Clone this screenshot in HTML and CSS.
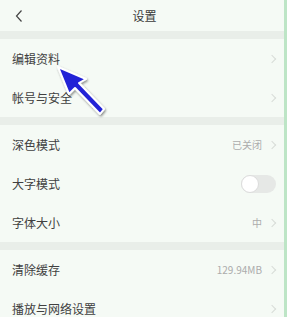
FILE: index.html
```html
<!DOCTYPE html>
<html lang="zh">
<head>
<meta charset="utf-8">
<link rel="stylesheet" href="styles.css">
</head>
<body>
<div class="page">
  <div class="screen">
    <div class="header">
      <svg class="back" width="10" height="14" viewBox="0 0 10 14"><path d="M7.5 1.5 L2.5 7 L7.5 12.5" fill="none" stroke="#444" stroke-width="1.2"/></svg>
      <div class="title">设置</div>
    </div>
    <div class="band"></div>
    <div class="row"><span class="label">编辑资料</span><span class="right"><span class="chev"></span></span></div>
    <div class="row"><span class="label">帐号与安全</span><span class="right"><span class="chev"></span></span></div>
    <div class="band"></div>
    <div class="row"><span class="label">深色模式</span><span class="right"><span class="val">已关闭</span><span class="chev"></span></span></div>
    <div class="row"><span class="label">大字模式</span><span class="right"><span class="toggle"><span class="knob"></span></span></span></div>
    <div class="row"><span class="label">字体大小</span><span class="right"><span class="val">中</span><span class="chev"></span></span></div>
    <div class="band"></div>
    <div class="row"><span class="label">清除缓存</span><span class="right"><span class="val">129.94MB</span><span class="chev"></span></span></div>
    <div class="row"><span class="label">播放与网络设置</span><span class="right"><span class="chev"></span></span></div>
  </div>
  <div class="edge"></div>
  <svg class="arrow" width="287" height="317" viewBox="0 0 287 317">
    <defs>
      <filter id="sh" x="-20%" y="-20%" width="140%" height="140%">
        <feDropShadow dx="1" dy="1.5" stdDeviation="1.2" flood-color="#000" flood-opacity="0.45"/>
      </filter>
    </defs>
    <g filter="url(#sh)">
      <path d="M58 67 L86 79 L79 83 L104 109 L100 114 L75 88 L69 94 Z" fill="#2323d6" stroke="#fff" stroke-width="2" stroke-linejoin="round"/>
    </g>
  </svg>
</div>
</body>
</html>
```
FILE: styles.css
```css
html, body {
  margin: 0;
  padding: 0;
}
body {
  width: 287px;
  height: 317px;
  overflow: hidden;
  background: #f5faf5;
  font-family: "Noto Sans CJK SC", "Noto Sans", sans-serif;
}
.page {
  position: relative;
  display: flex;
  width: 287px;
  height: 317px;
  overflow: hidden;
}
.screen {
  flex: 1;
  display: flex;
  flex-direction: column;
  background: #f5faf5;
  overflow: hidden;
}
.edge {
  width: 3px;
  flex: none;
  background: #bde5c6;
}
.header {
  position: relative;
  height: 31px;
  flex: none;
  display: flex;
  align-items: center;
  justify-content: center;
  padding-left: 5px;
}
.back {
  position: absolute;
  left: 14px;
  top: 9px;
}
.title {
  font-size: 12px;
  color: #3a3a3a;
}
.band {
  height: 8px;
  background: #e9eee9;
  flex: none;
}
.row {
  height: 39px;
  flex: none;
  display: flex;
  align-items: center;
  justify-content: space-between;
  padding: 0 6px 0 12px;
}
.label {
  font-size: 12px;
  color: #404040;
}
.right {
  display: flex;
  align-items: center;
  gap: 7px;
}
.val {
  font-size: 10px;
  color: #acacac;
}
.chev {
  width: 5px;
  height: 5px;
  border-top: 1px solid #d8dcd8;
  border-right: 1px solid #d8dcd8;
  transform: rotate(45deg);
  margin-right: 3px;
}
.toggle {
  position: relative;
  width: 35px;
  height: 18px;
  border-radius: 9px;
  background: #e6e8e6;
  margin-right: 2px;
}
.knob {
  position: absolute;
  left: 0;
  top: 0;
  width: 16px;
  height: 16px;
  border-radius: 50%;
  background: #fff;
  border: 1px solid #dcdcdc;
}
.arrow {
  position: absolute;
  left: 0;
  top: 0;
  pointer-events: none;
}
```
